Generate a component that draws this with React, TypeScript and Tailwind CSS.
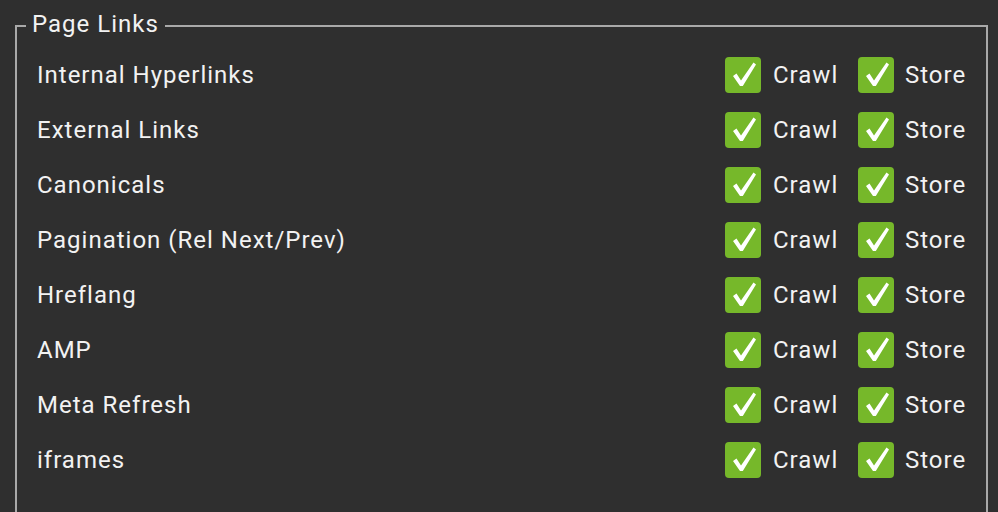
import React from "react";

const rows = [
  "Internal Hyperlinks",
  "External Links",
  "Canonicals",
  "Pagination (Rel Next/Prev)",
  "Hreflang",
  "AMP",
  "Meta Refresh",
  "iframes",
];

function Check() {
  return (
    <div className="w-[36px] h-[36px] rounded-[4px] bg-[#76b82a] flex items-center justify-center shrink-0">
      <svg width="36" height="36" viewBox="0 0 36 36">
        <path d="M8 19 L11.5 16.5 L16 23.5 L28.5 5.5 L31 7.5 L17.8 29 L15 29 Z" fill="#ffffff" />
      </svg>
    </div>
  );
}

export default function App() {
  return (
    <div
      className="w-[998px] h-[512px] bg-[#2f2f2f] overflow-hidden text-[#f2f2f2] tracking-[1px]"
      style={{ fontFamily: "Roboto, 'Liberation Sans', sans-serif" }}
    >
      <fieldset className="ml-[15px] mr-[10px] mt-[10px] border-2 border-[#a9a9a9] pl-[9px] pr-[21px] pb-[60px] m-0 min-w-0">
        <legend className="px-[6px] pb-[4px] text-[24px] leading-[28px]">Page Links</legend>
        <div className="mt-[5px] flex flex-col">
          {rows.map((r) => (
            <div key={r} className="h-[55px] flex items-center pl-[11px] text-[24px] leading-[28px]">
              <span className="flex-1">{r}</span>
              <div className="flex items-center w-[133px]">
                <Check />
                <span className="ml-[12px]">Crawl</span>
              </div>
              <div className="flex items-center w-[107px]">
                <Check />
                <span className="ml-[11px]">Store</span>
              </div>
            </div>
          ))}
        </div>
      </fieldset>
    </div>
  );
}
